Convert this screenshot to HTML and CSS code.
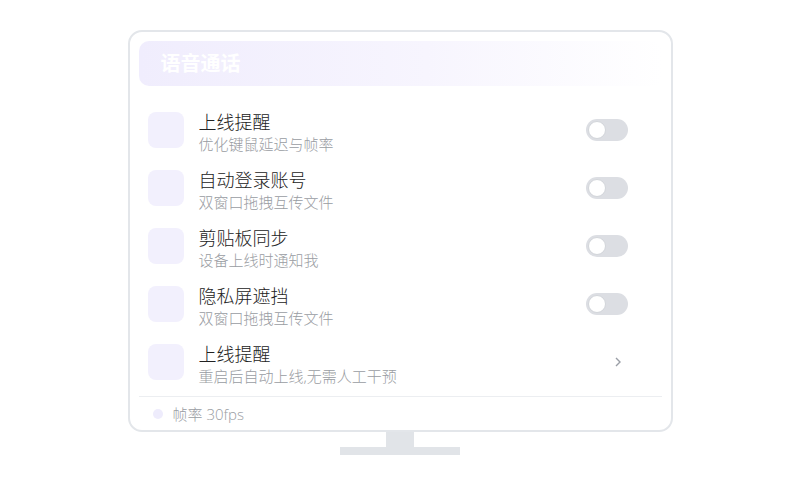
FILE: index.html
```html
<!DOCTYPE html>
<html lang="zh-CN">
<head>
    <meta charset="UTF-8">
    <meta name="viewport" content="width=device-width, initial-scale=1.0">
    <title>语音通话</title>
    <link rel="stylesheet" href="styles.css">
</head>
<body>

<div class="monitor">
    <div class="screen">
        <div class="screen-header">语音通话</div>

        <div class="setting-list">
            <div class="setting-row">
                <div class="setting-icon"></div>
                <div class="setting-text">
                    <div class="setting-title">上线提醒</div>
                    <div class="setting-desc">优化键鼠延迟与帧率</div>
                </div>
                <div class="toggle"><span class="knob"></span></div>
            </div>
            <div class="setting-row">
                <div class="setting-icon"></div>
                <div class="setting-text">
                    <div class="setting-title">自动登录账号</div>
                    <div class="setting-desc">双窗口拖拽互传文件</div>
                </div>
                <div class="toggle"><span class="knob"></span></div>
            </div>
            <div class="setting-row">
                <div class="setting-icon"></div>
                <div class="setting-text">
                    <div class="setting-title">剪贴板同步</div>
                    <div class="setting-desc">设备上线时通知我</div>
                </div>
                <div class="toggle"><span class="knob"></span></div>
            </div>
            <div class="setting-row">
                <div class="setting-icon"></div>
                <div class="setting-text">
                    <div class="setting-title">隐私屏遮挡</div>
                    <div class="setting-desc">双窗口拖拽互传文件</div>
                </div>
                <div class="toggle"><span class="knob"></span></div>
            </div>
            <div class="setting-row">
                <div class="setting-icon"></div>
                <div class="setting-text">
                    <div class="setting-title">上线提醒</div>
                    <div class="setting-desc">重启后自动上线,无需人工干预</div>
                </div>
                <svg class="chevron" width="6" height="10" viewBox="0 0 6 10">
                    <polyline points="1,1 5,5 1,9" fill="none" stroke="#9a9ea6" stroke-width="1.4"/>
                </svg>
            </div>
        </div>

        <div class="screen-footer">
            <span class="status-dot"></span>
            <span class="status-text">帧率 30fps</span>
        </div>
    </div>
    <div class="stand-neck"></div>
    <div class="stand-base"></div>
</div>

</body>
</html>
```

FILE: styles.css
```css
/* General Reset */
* {
    margin: 0;
    padding: 0;
    box-sizing: border-box;
}

body {
    font-family: "Open Sans", "Noto Sans CJK SC", sans-serif;
    background-color: #ffffff;
    color: #333;
}

/* Monitor */
.monitor {
    display: flex;
    flex-direction: column;
    align-items: center;
    padding-top: 30px;
}

.screen {
    width: 545px;
    border: 2px solid #e3e6ea;
    border-radius: 14px;
    padding: 9px 9px 0;
    background-color: #fff;
}

.screen-header {
    height: 45px;
    border-radius: 10px;
    background: linear-gradient(90deg, #f0edfd 0%, #f7f5fe 55%, #ffffff 100%);
    color: #ffffff;
    font-size: 20px;
    font-weight: 700;
    line-height: 46px;
    padding-left: 22px;
}

/* Settings */
.setting-list {
    margin-top: 17px;
}

.setting-row {
    display: flex;
    align-items: flex-start;
    height: 58px;
    padding: 7px 34px 7px 9px;
}

.setting-icon {
    width: 36px;
    height: 36px;
    margin-top: 2px;
    border-radius: 8px;
    background-color: #f2f0fd;
}

.setting-text {
    flex: 1;
    margin-left: 15px;
}

.setting-title {
    font-size: 18px;
    font-weight: 300;
    line-height: 24px;
    color: #222;
}

.setting-desc {
    font-size: 15px;
    font-weight: 300;
    line-height: 20px;
    color: #999ca2;
}

.toggle {
    width: 42px;
    height: 22px;
    margin-top: 9px;
    border-radius: 11px;
    background-color: #dcdee3;
    padding: 2px;
}

.knob {
    display: block;
    width: 18px;
    height: 18px;
    border-radius: 50%;
    background-color: #fff;
    border: 1px solid #d2d5da;
}

.chevron {
    margin-top: 15px;
    margin-right: 7px;
}

/* Footer */
.screen-footer {
    display: flex;
    align-items: center;
    height: 34px;
    margin-top: 3px;
    border-top: 1px solid #eceef1;
    padding-left: 14px;
}

.status-dot {
    width: 10px;
    height: 10px;
    border-radius: 50%;
    background-color: #eeecfc;
}

.status-text {
    margin-left: 10px;
    font-size: 15px;
    font-weight: 300;
    color: #999ca2;
}

/* Stand */
.stand-neck {
    width: 28px;
    height: 15px;
    background-color: #e1e4e8;
}

.stand-base {
    width: 120px;
    height: 8px;
    background-color: #e1e4e8;
}
```
